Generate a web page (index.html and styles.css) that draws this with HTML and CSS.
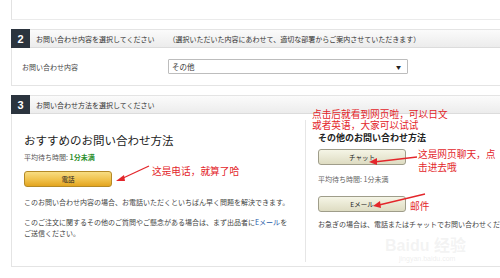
FILE: index.html
```html
<!DOCTYPE html>
<html lang="ja">
<head>
<meta charset="utf-8">
<link rel="stylesheet" href="styles.css">
</head>
<body>
<div class="page">
  <div class="top-box"></div>

  <div class="sec-head">
    <div class="num">2</div>
    <div class="sec-title">お問い合わせ内容を選択してください<span class="sub">（選択いただいた内容にあわせて、適切な部署からご案内させていただきます）</span></div>
  </div>
  <div class="box box2">
    <div class="label">お問い合わせ内容</div>
    <div class="select"><span>その他</span><span class="caret">▼</span></div>
  </div>

  <div class="sec-head">
    <div class="num">3</div>
    <div class="sec-title">お問い合わせ方法を選択してください</div>
  </div>
  <div class="box box3">
    <div class="left">
      <div class="big-title">おすすめのお問い合わせ方法</div>
      <div class="wait">平均待ち時間: <b class="green">1分未満</b></div>
      <div class="btn btn-phone">電話</div>
      <p class="desc d1">このお問い合わせ内容の場合、お電話いただくといちばん早く問題を解決できます。</p>
      <p class="desc d2">このご注文に関するその他のご質問やご懸念がある場合は、まず出品者に<span class="link">Eメール</span>を<br>ご送信ください。</p>
    </div>
    <div class="divider"></div>
    <div class="right">
      <div class="small-title">その他のお問い合わせ方法</div>
      <div class="btn btn-gray btn-chat">チャット</div>
      <div class="wait gray">平均待ち時間: 1分未満</div>
      <div class="btn btn-gray btn-mail">Eメール</div>
      <div class="desc urgent">お急ぎの場合は、電話またはチャットでお問い合わせください</div>
    </div>
  </div>

  <div class="note n1">这是电话，就算了哈</div>
  <div class="note n2">点击后就看到网页啦，可以日文<br>或者英语，大家可以试试</div>
  <div class="note n3">这是网页聊天，点<br>击进去哦</div>
  <div class="note n4">邮件</div>

  <svg class="arrows" width="500" height="278" viewBox="0 0 500 278">
    <g stroke="#e3262b" stroke-width="1.3" fill="none">
      <line x1="149" y1="166" x2="121" y2="179"/>
      <line x1="417" y1="157" x2="374" y2="162"/>
      <line x1="425" y1="194" x2="379" y2="205"/>
    </g>
    <g fill="#e3262b">
      <polygon points="116,181 124,175 125,181"/>
      <polygon points="369,162 377,158 377,165"/>
      <polygon points="373,206 380,201 381,208"/>
    </g>
  </svg>

  <div class="watermark">
    <div class="wm-big">Bai<span class="paw">du</span> 经验</div>
    <div class="wm-small">jingyan.baidu.com</div>
  </div>
</div>
</body>
</html>
```
FILE: styles.css
```css
html, body {
  margin: 0;
  padding: 0;
  background: #fff;
}
* {
  box-sizing: border-box;
}
body {
  width: 500px;
  height: 278px;
  overflow: hidden;
  font-family: "Noto Sans CJK JP", "Noto Sans", sans-serif;
  color: #333;
  font-size: 7px;
}
.page {
  position: relative;
  padding-left: 11px;
  width: 500px;
  height: 278px;
}
.top-box {
  height: 20px;
  border-left: 1px solid #e2e2e2;
  border-bottom: 1px solid #ebebeb;
  margin-bottom: 9px;
}
.sec-head {
  display: flex;
  height: 19px;
  background: linear-gradient(#fbfbfb, #ececec);
  border-top: 1px solid #e4e4e4;
  border-bottom: 1px solid #dcdcdc;
}
.num {
  width: 19px;
  margin-top: -1px;
  margin-bottom: -1px;
  background: #2b343e;
  color: #fff;
  font-family: "Liberation Sans", sans-serif;
  font-weight: bold;
  font-size: 11px;
  display: flex;
  align-items: center;
  justify-content: center;
}
.sec-title {
  display: flex;
  align-items: center;
  padding-left: 6px;
  font-size: 7px;
  color: #333;
  white-space: nowrap;
}
.sub {
  margin-left: 14px;
}
.box {
  border-left: 1px solid #e4e4e4;
  border-bottom: 1px solid #e4e4e4;
}
.box2 {
  height: 38px;
  display: flex;
  align-items: center;
  margin-bottom: 9px;
}
.label {
  width: 156px;
  padding-left: 10px;
  font-size: 7px;
  color: #444;
}
.select {
  width: 240px;
  height: 15px;
  border: 1px solid #bdbdbd;
  border-radius: 1px;
  display: flex;
  align-items: center;
  justify-content: space-between;
  padding: 0 6px 0 3px;
  font-size: 7.5px;
  color: #333;
  background: #fff;
}
.caret {
  font-size: 5px;
  color: #222;
}
.box3 {
  height: 153px;
  display: flex;
}
.left {
  width: 293px;
  padding: 18px 0 0 12px;
}
.big-title {
  font-size: 11.5px;
  color: #222;
  line-height: 16px;
  white-space: nowrap;
}
.wait {
  font-size: 7px;
  color: #555;
  margin-top: 3px;
  line-height: 12px;
}
.green {
  color: #2c8f2c;
}
.btn {
  height: 16px;
  border-radius: 3px;
  display: flex;
  align-items: center;
  justify-content: center;
  font-size: 6.5px;
  color: #222;
}
.btn-phone {
  width: 88px;
  margin-top: 8px;
  background: linear-gradient(#f8dd82, #f0c14b 55%, #e3a51f);
  border: 1px solid #b58a26;
}
.desc {
  margin: 0;
  font-size: 7px;
  color: #444;
  line-height: 11px;
  white-space: nowrap;
}
.d1 {
  margin-top: 10px;
}
.d2 {
  margin-top: 9px;
}
.link {
  color: #1e5ba8;
}
.divider {
  width: 1px;
  background: #e6e6e6;
  margin: 6px 0 4px;
}
.right {
  padding: 17px 0 0 12px;
  flex: 1;
  white-space: nowrap;
  overflow: hidden;
}
.small-title {
  font-size: 9px;
  font-weight: bold;
  color: #222;
  line-height: 14px;
}
.btn-gray {
  width: 88px;
  background: linear-gradient(#f5f5e6, #dedcc2);
  border: 1px solid #9f9d8a;
}
.btn-chat {
  margin-top: 4px;
}
.gray {
  margin-top: 8px;
  color: #666;
}
.btn-mail {
  margin-top: 11px;
}
.urgent {
  margin-top: 7px;
}
.note {
  position: absolute;
  color: #e3262b;
  font-family: "Noto Sans CJK SC", sans-serif;
  font-size: 9.7px;
  line-height: 11px;
  white-space: nowrap;
}
.n1 { left: 152px; top: 166px; }
.n2 { left: 312px; top: 109px; }
.n3 { left: 418px; top: 148px; line-height: 13px; }
.n4 { left: 410px; top: 201px; }
.arrows {
  position: absolute;
  left: 0;
  top: 0;
}
.watermark {
  position: absolute;
  left: 385px;
  top: 238px;
  font-family: "Liberation Sans", "Noto Sans CJK SC", sans-serif;
}
.wm-big {
  font-size: 16px;
  line-height: 16px;
  font-weight: bold;
  color: rgba(215,215,215,0.3);
}
.paw {
  color: rgba(215,215,215,0.3);
}
.wm-small {
  font-size: 7px;
  line-height: 9px;
  color: rgba(205,205,205,0.35);
  margin-left: 14px;
}
```
